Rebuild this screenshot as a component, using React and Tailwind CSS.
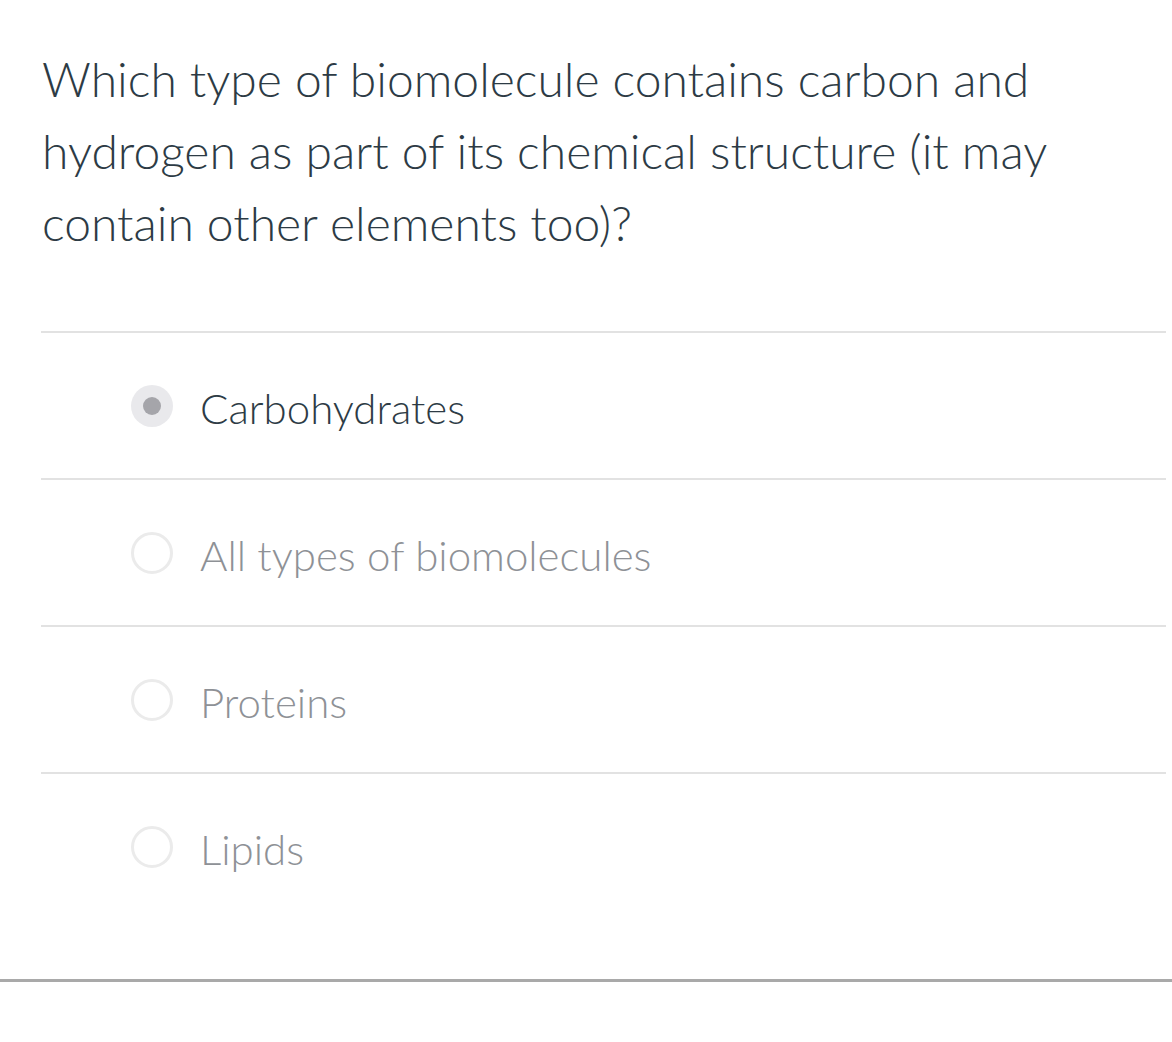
import React from "react";

const options = [
  { label: "Carbohydrates", selected: true },
  { label: "All types of biomolecules" },
  { label: "Proteins" },
  { label: "Lipids" },
];

const Radio = ({ selected }) =>
  selected ? (
    <span className="flex h-[42px] w-[42px] shrink-0 items-center justify-center rounded-full bg-[#e9e9ec]">
      <span className="h-[18px] w-[18px] rounded-full bg-[#a5a5aa]" />
    </span>
  ) : (
    <span className="h-[42px] w-[42px] shrink-0 rounded-full border-[3px] border-[#ebebeb]" />
  );

export default function App() {
  return (
    <div className="min-h-[1042px] bg-white font-['Lato','Liberation_Sans',sans-serif]">
      <div className="pl-[41px] pr-[6px]">
        {/* question */}
        <p className="pt-[43px] pl-[1px] pr-[70px] text-[48px] font-light leading-[72px] text-[#2d3b45]">
          Which type of biomolecule contains carbon and hydrogen as part of its chemical structure (it may contain other elements too)?
        </p>

        {/* answers */}
        <ul className="mt-[72px]">
          {options.map((o) => (
            <li
              key={o.label}
              className="flex h-[147px] items-center gap-[27px] border-t-2 border-[#e2e2e2] pl-[90px]"
            >
              <Radio selected={o.selected} />
              <span
                className={`pt-[5px] text-[42px] font-light ${
                  o.selected ? "text-[#2d3b45]" : "text-[#8e9196]"
                }`}
              >
                {o.label}
              </span>
            </li>
          ))}
        </ul>
      </div>

      <div className="mt-[60px] h-[3px] w-full bg-[#a9a9a9]" />
    </div>
  );
}
